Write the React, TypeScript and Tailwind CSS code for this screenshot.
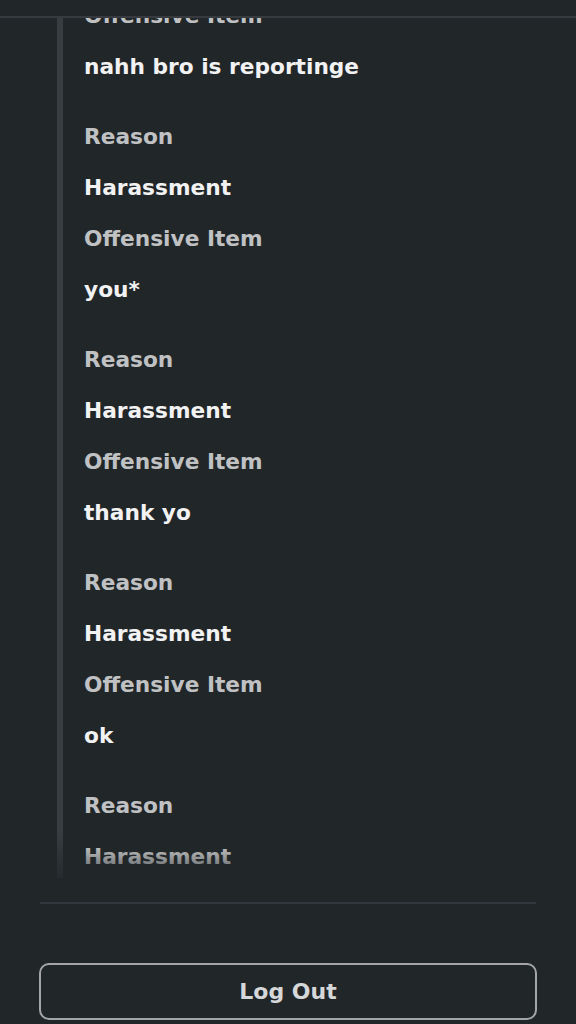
import React from 'react';

type Report = {
  reason: string;
  item: string;
};

const REPORTS: Report[] = [
  { reason: 'Harassment', item: 'nahh bro is reportinge' },
  { reason: 'Harassment', item: 'you*' },
  { reason: 'Harassment', item: 'thank yo' },
  { reason: 'Harassment', item: 'ok' },
  { reason: 'Harassment', item: 'idk' },
];

function ReportBlock({ report }: { report: Report }) {
  return (
    <div className="flex flex-col pb-[19px] text-[21.7px] font-bold leading-[51px]">
      <div className="text-[#c0c1c3]">Reason</div>
      <div className="text-[#f2f2f3]">{report.reason}</div>
      <div className="text-[#c0c1c3]">Offensive Item</div>
      <div className="text-[#f2f2f3]">{report.item}</div>
    </div>
  );
}

export default function App() {
  return (
    <div className="flex h-[1024px] w-[576px] flex-col overflow-hidden bg-[#212629] font-['DejaVu_Sans',sans-serif]">
      <div className="relative z-10 h-[18px] shrink-0 border-b-2 border-[#373a3f] bg-[#212629]" />

      <div className="relative h-[860px] shrink-0 overflow-hidden">
        <div className="ml-[57px] flex h-full flex-col border-l-[6px] border-[#393c41] pl-[21px]">
          <div className="-mt-[130px] flex flex-col">
            {REPORTS.map((r, i) => (
              <ReportBlock key={i} report={r} />
            ))}
          </div>
        </div>
        <div className="absolute inset-x-0 bottom-0 h-[45px] bg-gradient-to-b from-transparent to-[#212629]/80" />
      </div>

      <div className="mx-[40px] mt-[24px] border-t-2 border-[#33373d]" />

      <div className="mt-[59px] px-[39px]">
        <button className="flex h-[57px] w-[498px] items-center justify-center rounded-[10px] border-2 border-[#a3a5a8] text-[22px] font-bold text-[#d6d7d9]">
          Log Out
        </button>
      </div>
    </div>
  );
}
